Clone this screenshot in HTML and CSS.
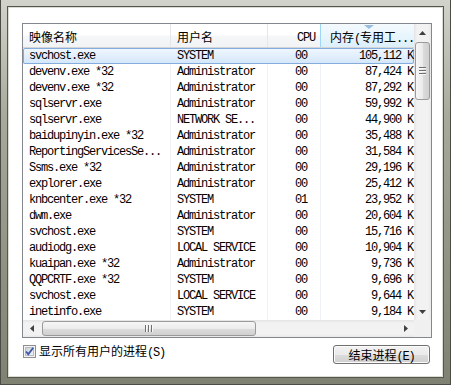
FILE: index.html
```html
<!DOCTYPE html>
<html lang="zh-CN">
<head>
  <meta charset="UTF-8" />
  <meta name="viewport" content="width=device-width, initial-scale=1.0" />
  <title>进程</title>
  <link rel="stylesheet" href="styles.css">
</head>
<body>

  <div class="window">
    <div class="pane">

      <div class="list">
        <div class="list-main">
          <div class="cols">
            <div class="head">
              <span class="c1">映像名称</span>
              <span class="c2">用户名</span>
              <span class="c3 mono">CPU</span>
              <span class="c4 sorted">内存<span class="mono">(</span>专用工<span class="mono">...</span><i class="sort-arrow"></i></span>
            </div>

            <div class="row sel"><span class="c1">svchost.exe</span><span class="c2">SYSTEM</span><span class="c3">00</span><span class="c4">105,112 K</span></div>
            <div class="row"><span class="c1">devenv.exe *32</span><span class="c2">Administrator</span><span class="c3">00</span><span class="c4">87,424 K</span></div>
            <div class="row"><span class="c1">devenv.exe *32</span><span class="c2">Administrator</span><span class="c3">00</span><span class="c4">87,292 K</span></div>
            <div class="row"><span class="c1">sqlservr.exe</span><span class="c2">Administrator</span><span class="c3">00</span><span class="c4">59,992 K</span></div>
            <div class="row"><span class="c1">sqlservr.exe</span><span class="c2">NETWORK SE...</span><span class="c3">00</span><span class="c4">44,900 K</span></div>
            <div class="row"><span class="c1">baidupinyin.exe *32</span><span class="c2">Administrator</span><span class="c3">00</span><span class="c4">35,488 K</span></div>
            <div class="row"><span class="c1">ReportingServicesSe...</span><span class="c2">Administrator</span><span class="c3">00</span><span class="c4">31,584 K</span></div>
            <div class="row"><span class="c1">Ssms.exe *32</span><span class="c2">Administrator</span><span class="c3">00</span><span class="c4">29,196 K</span></div>
            <div class="row"><span class="c1">explorer.exe</span><span class="c2">Administrator</span><span class="c3">00</span><span class="c4">25,412 K</span></div>
            <div class="row"><span class="c1">knbcenter.exe *32</span><span class="c2">SYSTEM</span><span class="c3">01</span><span class="c4">23,952 K</span></div>
            <div class="row"><span class="c1">dwm.exe</span><span class="c2">Administrator</span><span class="c3">00</span><span class="c4">20,604 K</span></div>
            <div class="row"><span class="c1">svchost.exe</span><span class="c2">SYSTEM</span><span class="c3">00</span><span class="c4">15,716 K</span></div>
            <div class="row"><span class="c1">audiodg.exe</span><span class="c2">LOCAL SERVICE</span><span class="c3">00</span><span class="c4">10,904 K</span></div>
            <div class="row"><span class="c1">kuaipan.exe *32</span><span class="c2">Administrator</span><span class="c3">00</span><span class="c4">9,736 K</span></div>
            <div class="row"><span class="c1">QQPCRTF.exe *32</span><span class="c2">SYSTEM</span><span class="c3">00</span><span class="c4">9,696 K</span></div>
            <div class="row"><span class="c1">svchost.exe</span><span class="c2">LOCAL SERVICE</span><span class="c3">00</span><span class="c4">9,644 K</span></div>
            <div class="row"><span class="c1">inetinfo.exe</span><span class="c2">SYSTEM</span><span class="c3">00</span><span class="c4">9,184 K</span></div>
          </div>

          <!-- barra vertical -->
          <div class="vscroll">
            <div class="arrow"><svg width="7" height="4"><polygon points="0,4 7,4 3.5,0" fill="#404040"/></svg></div>
            <div class="vthumb"><i></i><i></i><i></i></div>
            <div class="vspace"></div>
            <div class="arrow"><svg width="7" height="4"><polygon points="0,0 7,0 3.5,4" fill="#404040"/></svg></div>
          </div>
        </div>

        <!-- barra horizontal -->
        <div class="hscroll-row">
          <div class="hscroll">
            <div class="arrow"><svg width="4" height="7"><polygon points="4,0 4,7 0,3.5" fill="#404040"/></svg></div>
            <div class="hthumb"><i></i><i></i><i></i></div>
            <div class="hspace"></div>
            <div class="arrow"><svg width="4" height="7"><polygon points="0,0 0,7 4,3.5" fill="#404040"/></svg></div>
          </div>
          <div class="corner"></div>
        </div>
      </div>

      <div class="foot">
        <label class="check">
          <svg width="13" height="13">
            <defs>
              <linearGradient id="cb" x1="0" y1="0" x2="1" y2="1">
                <stop offset="0" stop-color="#cbcfd5"/>
                <stop offset="1" stop-color="#f6f6f6"/>
              </linearGradient>
            </defs>
            <rect x="0.5" y="0.5" width="12" height="12" fill="#f4f4f4" stroke="#8f8f8f"/>
            <rect x="2.5" y="2.5" width="8" height="8" fill="url(#cb)" stroke="#b8bcc4"/>
            <path d="M3 6.5 L5.3 9.2 L10.2 2.8" fill="none" stroke="#3a5aa8" stroke-width="1.8"/>
          </svg>
          <span>显示所有用户的进程<span class="mono">(S)</span></span>
        </label>
        <button class="btn">结束进程<span class="mono">(E)</span></button>
      </div>

    </div>
  </div>

</body>
</html>
```

FILE: styles.css
```css
body {
  margin: 0;
  background: #fff;
}

.window {
  width: 451px;
  height: 385px;
  box-sizing: border-box;
  padding: 6px;
  background: linear-gradient(#d2d3cb 0%, #a8aa9d 30%, #8f9183 70%, #7f8173 100%);
  border: 1px solid #4b4c43;
  border-top: none;
}

.pane {
  height: 100%;
  box-sizing: border-box;
  padding: 16px 11px 0 14px;
  background: #fff;
  border: 1px solid #55564c;
  box-shadow: inset 0 0 0 1px #dcdcd5;
}

/* lista de procesos */
.list {
  width: 410px;
  height: 315px;
  box-sizing: border-box;
  border: 1px solid #828790;
  background: #fff;
}
.list-main {
  display: flex;
  height: 296px;
}
.cols {
  width: 391px;
}

.head {
  display: flex;
  height: 24px;
  box-sizing: border-box;
  border-bottom: 1px solid #d5d5d5;
  background: linear-gradient(#ffffff 0%, #ffffff 45%, #f5f6f7 55%, #f2f3f5 100%);
  font-family: "Noto Sans CJK SC", sans-serif;
  font-size: 12px;
  color: #000;
}
.head > span {
  display: block;
  box-sizing: border-box;
  padding-top: 2px;
  line-height: 21px;
  white-space: nowrap;
  overflow: hidden;
}
.head .c1, .head .c2 {
  border-right: 1px solid #e3e7ec;
}
.head .c3 {
  padding: 4px 5px 0 0;
}
.head .c4 {
  text-align: left;
  padding: 2px 0 0 9px;
}
.head .sorted {
  position: relative;
  background: linear-gradient(#f4fafe 0%, #e8f5fd 50%, #dceffb 100%);
  border-left: 1px solid #9fd5f5;
}
.sort-arrow {
  position: absolute;
  top: 1px;
  left: 43px;
  width: 0;
  height: 0;
  border-left: 5px solid transparent;
  border-right: 5px solid transparent;
  border-top: 4px solid #98bde3;
}

.mono {
  font-family: "Liberation Mono", monospace;
  font-size: 12px;
  letter-spacing: -1.2px;
}

.row {
  display: flex;
  height: 16px;
  line-height: 16px;
  font-family: "Liberation Mono", monospace;
  font-size: 12px;
  letter-spacing: -1.2px;
  color: #000;
}
.row > span {
  display: block;
  box-sizing: border-box;
  white-space: pre;
  overflow: hidden;
}
.c1 {
  width: 148px;
  padding-left: 6px;
  border-right: 1px solid #eef1f5;
}
.c2 {
  width: 97px;
  padding-left: 6px;
  border-right: 1px solid #eef1f5;
}
.c3 {
  width: 52px;
  text-align: right;
  padding-right: 13px;
}
.c4 {
  width: 94px;
  text-align: right;
  padding-right: 1px;
  border-left: 1px solid #eef1f5;
}
.row.sel {
  background: linear-gradient(#f1f7fe 0%, #e2effc 50%, #d3e6fa 100%);
  box-shadow: inset 0 0 0 1px #84acdd;
  border-radius: 2px;
}
.row.sel > span {
  border-color: transparent;
}

/* barras de desplazamiento */
.vscroll {
  width: 17px;
  display: flex;
  flex-direction: column;
  background: linear-gradient(to right, #e4e4e4 0, #f2f2f2 3px, #f2f2f2 14px, #e9e9e9 100%);
}
.arrow {
  width: 17px;
  height: 17px;
  flex: none;
  display: flex;
  align-items: center;
  justify-content: center;
}
.vscroll .arrow:first-child {
  height: 18px;
}
.vthumb {
  margin: 0 1px;
  height: 58px;
  box-sizing: border-box;
  border: 1px solid #9a9a9a;
  border-radius: 3px;
  background: linear-gradient(to right, #f6f6f6 0%, #ebebeb 50%, #dcdcdc 51%, #d0d0d0 100%);
  display: flex;
  flex-direction: column;
  align-items: center;
  justify-content: center;
  gap: 1px;
}
.vthumb i {
  display: block;
  width: 7px;
  height: 1px;
  background: #6f6f6f;
  border-bottom: 1px solid #f8f8f8;
}
.vspace {
  flex: 1;
}

.hscroll-row {
  display: flex;
  height: 17px;
}
.hscroll {
  width: 391px;
  display: flex;
  background: linear-gradient(#e4e4e4 0, #f2f2f2 3px, #f2f2f2 14px, #e9e9e9 100%);
}
.hthumb {
  margin: 1px 0 1px 2px;
  width: 214px;
  box-sizing: border-box;
  border: 1px solid #9a9a9a;
  border-radius: 3px;
  background: linear-gradient(#f6f6f6 0%, #ebebeb 50%, #dcdcdc 51%, #d0d0d0 100%);
  display: flex;
  align-items: center;
  justify-content: center;
  gap: 1px;
}
.hthumb i {
  display: block;
  width: 1px;
  height: 7px;
  background: #6f6f6f;
  border-right: 1px solid #f8f8f8;
}
.hspace {
  flex: 1;
}
.corner {
  width: 17px;
  background: #f0f0f0;
}

/* parte inferior */
.foot {
  display: flex;
  align-items: flex-start;
  margin-top: 7px;
  padding: 0 2px 0 1px;
}
.check {
  display: flex;
  align-items: center;
  gap: 3px;
  height: 13px;
  font-family: "Noto Sans CJK SC", sans-serif;
  font-size: 12px;
  line-height: 13px;
  color: #000;
}
.check svg {
  display: block;
}
.btn {
  margin-left: auto;
  width: 97px;
  height: 19px;
  padding: 0;
  border: 1px solid #707070;
  border-radius: 3px;
  background: linear-gradient(#f2f2f2 0%, #ebebeb 50%, #dddddd 51%, #cfcfcf 100%);
  box-shadow: inset 0 0 0 1px #fbfbfb;
  font-family: "Noto Sans CJK SC", sans-serif;
  font-size: 12px;
  line-height: 17px;
  color: #000;
}
```
